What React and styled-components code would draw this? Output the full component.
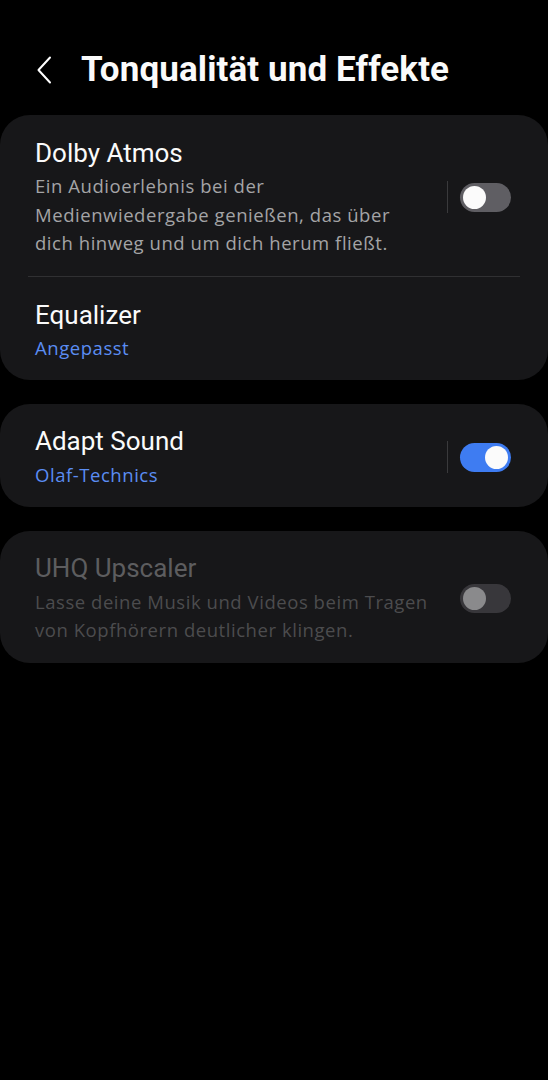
import React from "react";
import styled, { createGlobalStyle } from "styled-components";

const Global = createGlobalStyle`
  html, body { margin: 0; padding: 0; background: #000; }
  body { font-family: Roboto, "Noto Sans", sans-serif; -webkit-font-smoothing: antialiased; }
`;

const Screen = styled.div`
  width: 548px;
  min-height: 1080px;
  background: #000;
  display: flex;
  flex-direction: column;
`;

const Header = styled.header`
  height: 115px;
  display: flex;
  align-items: center;
  padding: 25px 0 0 34px;
  box-sizing: border-box;
  gap: 27px;
`;

const BackButton = styled.button`
  background: none;
  border: 0;
  padding: 0;
  width: 20px;
  height: 28px;
  display: flex;
  align-items: center;
  justify-content: center;
  color: #fff;
`;

const Title = styled.h1`
  margin: 0;
  font-size: 35px;
  line-height: 40px;
  font-weight: 700;
  color: #fafafa;
  letter-spacing: 0.1px;
`;

const Cards = styled.div`
  display: flex;
  flex-direction: column;
  gap: 24px;
`;

const Card = styled.section`
  background: #171719;
  border-radius: 30px;
  display: flex;
  flex-direction: column;
`;

const Row = styled.div`
  display: flex;
  align-items: center;
  padding: ${(p) => p.$pad || "22px 37px 18px 35px"};
`;

const TextCol = styled.div`
  flex: 1;
  display: flex;
  flex-direction: column;
  gap: ${(p) => p.$gap || "2px"};
  padding-right: ${(p) => p.$pr || "0"};
`;

const RowTitle = styled.div`
  font-size: 26px;
  line-height: 32px;
  color: ${(p) => (p.$disabled ? "#5d5d5f" : "#fafafa")};
`;

const RowSub = styled.div`
  font-family: "Open Sans", Roboto, sans-serif;
  font-size: 18.5px;
  line-height: 28.5px;
  letter-spacing: 0.55px;
  color: ${(p) => (p.$disabled ? "#4c4c4e" : p.$blue ? "#5b8df3" : "#a4a4a6")};
`;

const Divider = styled.div`
  height: 1px;
  background: #303032;
  margin: 0 28px;
`;

const VLine = styled.div`
  width: 1px;
  height: 32px;
  background: #3a3a3c;
  margin-right: 12px;
`;

const Track = styled.div`
  width: 51px;
  height: 29px;
  border-radius: 15px;
  box-sizing: border-box;
  background: ${(p) => (p.$on ? "#3e7cf2" : p.$disabled ? "#38373b" : "#5f5e63")};
  display: flex;
  align-items: center;
  justify-content: ${(p) => (p.$on ? "flex-end" : "flex-start")};
  padding: 0 3px;
  flex-shrink: 0;
`;

const Knob = styled.div`
  width: 23px;
  height: 23px;
  border-radius: 50%;
  background: ${(p) => (p.$disabled ? "#8a8a8c" : "#fbfbfb")};
`;

const Toggle = ({ on, disabled }) => (
  <Track $on={on} $disabled={disabled}>
    <Knob $disabled={disabled} />
  </Track>
);

export default function App() {
  return (
    <Screen>
      <Global />
      <Header>
        <BackButton aria-label="Zurück">
          <svg width="16" height="28" viewBox="0 0 16 28" fill="none">
            <path d="M14 1.5 L2.5 14 L14 26.5" stroke="#fff" strokeWidth="2" strokeLinecap="round" strokeLinejoin="round" />
          </svg>
        </BackButton>
        <Title>Tonqualität und Effekte</Title>
      </Header>
      <Cards>
        <Card>
          <Row $pad="22px 37px 18px 35px">
            <TextCol $gap="3px" $pr="36px">
              <RowTitle>Dolby Atmos</RowTitle>
              <RowSub>
                Ein Audioerlebnis bei der Medienwiedergabe genießen, das über dich hinweg und um dich herum fließt.
              </RowSub>
            </TextCol>
            <VLine />
            <Toggle on={false} />
          </Row>
          <Divider />
          <Row $pad="22px 37px 18px 35px">
            <TextCol $gap="3px">
              <RowTitle>Equalizer</RowTitle>
              <RowSub $blue>Angepasst</RowSub>
            </TextCol>
          </Row>
        </Card>
        <Card>
          <Row $pad="21px 37px 17px 35px">
            <TextCol $gap="4px">
              <RowTitle>Adapt Sound</RowTitle>
              <RowSub $blue>Olaf-Technics</RowSub>
            </TextCol>
            <VLine />
            <Toggle on />
          </Row>
        </Card>
        <Card>
          <Row $pad="21px 37px 18px 35px">
            <TextCol $gap="4px" $pr="8px">
              <RowTitle $disabled>UHQ Upscaler</RowTitle>
              <RowSub $disabled>
                Lasse deine Musik und Videos beim Tragen von Kopfhörern deutlicher klingen.
              </RowSub>
            </TextCol>
            <Toggle on={false} disabled />
          </Row>
        </Card>
      </Cards>
    </Screen>
  );
}
